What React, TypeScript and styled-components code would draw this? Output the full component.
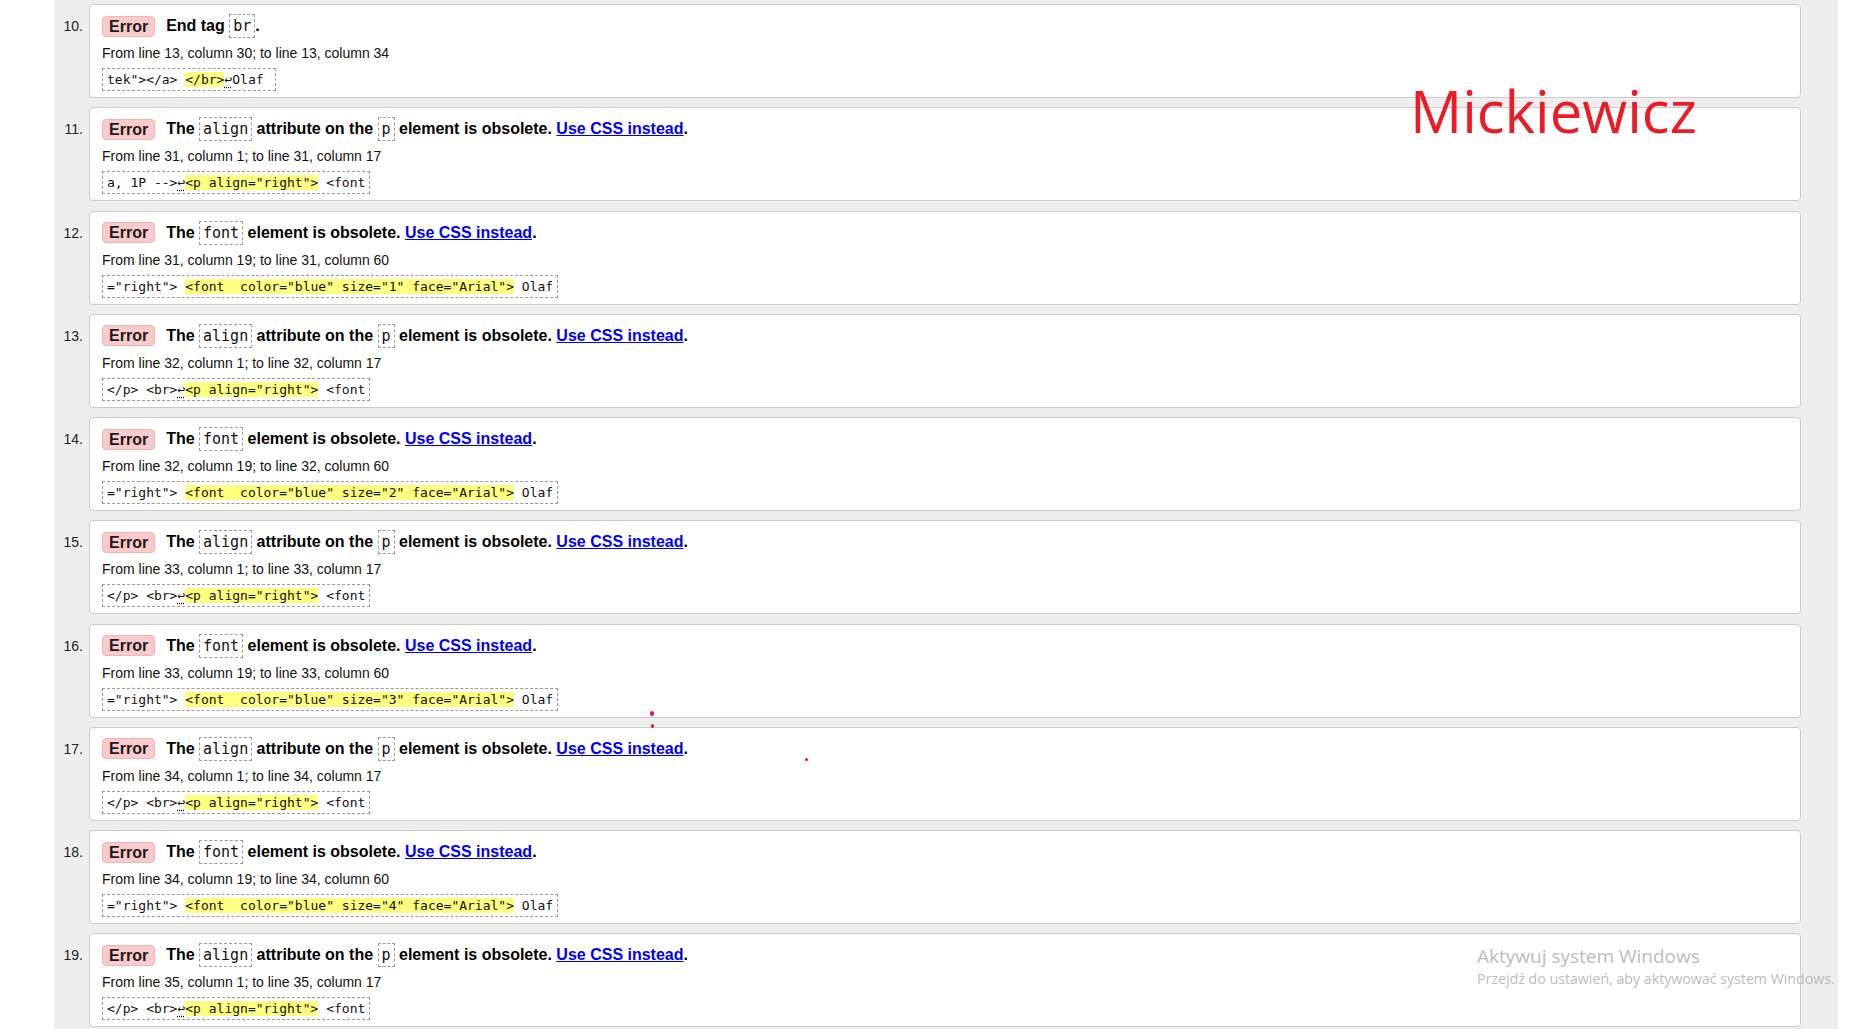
import React from "react";
import styled, { createGlobalStyle } from "styled-components";

const GlobalStyle = createGlobalStyle`
  html, body { margin: 0; padding: 0; background: #ffffff; }
  body { font-family: "Liberation Sans", Arial, sans-serif; overflow: hidden; }
`;

const Page = styled.div`
  position: relative;
  width: 1865px;
  height: 1029px;
  overflow: hidden;
  display: flex;
`;

const Column = styled.div`
  margin-left: 54px;
  width: 1784px;
  background: #eeeeee;
  padding: 4px 37px 0 0;
  box-sizing: border-box;
`;

const List = styled.ol`
  list-style: none;
  margin: 0;
  padding: 0;
  display: flex;
  flex-direction: column;
  gap: 9.25px;
`;

const Item = styled.li`
  display: grid;
  grid-template-columns: 29px 1fr;
  column-gap: 6px;
`;

const Num = styled.div`
  text-align: right;
  font: 14px/16px "Liberation Sans", Arial, sans-serif;
  color: #222;
  padding-top: 14px;
`;

const Card = styled.div`
  background: #ffffff;
  border: 1px solid #cccccc;
  border-radius: 4px;
  box-sizing: border-box;
  height: 94px;
  padding: 8px 12px 7px 12px;
`;

const Title = styled.div`
  display: flex;
  align-items: center;
  height: 26px;
  font: bold 16px/26px "Liberation Sans", Arial, sans-serif;
  color: #000;
  white-space: pre;
`;

const Badge = styled.span`
  display: inline-block;
  box-sizing: border-box;
  height: 21px;
  line-height: 19px;
  padding: 0 6px;
  margin-right: 11px;
  background: #fbcaca;
  border: 1px solid #efb6b6;
  border-radius: 4px;
  color: #1a1a1a;
`;

const Message = styled.span`
  display: inline-flex;
  align-items: center;
`;

const InlineCode = styled.code`
  display: inline-block;
  font: normal 15px/22px "DejaVu Sans Mono", monospace;
  border: 1px dashed #9a9a9a;
  padding: 0 3px;
  color: #111;
`;

const Link = styled.a`
  color: #0000ee;
  text-decoration: underline;
`;

const Location = styled.div`
  margin-top: 3px;
  font: 14px/22px "Liberation Sans", Arial, sans-serif;
  color: #111;
`;

const Extract = styled.code`
  display: inline-block;
  margin-top: 4px;
  font: 13px/21px "DejaVu Sans Mono", monospace;
  border: 1px dashed #9a9a9a;
  padding: 0 4px;
  white-space: pre;
  color: #111;
`;

const Mark = styled.mark`
  background: #ffff80;
  color: #111;
`;

const Lf = styled.span`
  text-decoration: underline dotted #000;
  text-underline-offset: 3px;
`;

const Annotation = styled.div`
  position: absolute;
  left: 1410px;
  top: 82px;
  font: 58px/58px "Open Sans", sans-serif;
  color: #ed1c24;
  white-space: nowrap;
`;

const Dot = styled.span<{ $x: number; $y: number; $w: number; $h: number }>`
  position: absolute;
  left: ${(p) => p.$x}px;
  top: ${(p) => p.$y}px;
  width: ${(p) => p.$w}px;
  height: ${(p) => p.$h}px;
  border-radius: 50%;
  background: #e8141c;
`;

const Watermark = styled.div`
  position: absolute;
  left: 1477px;
  top: 944px;
  color: #bcbcbc;
  font-family: "Open Sans", sans-serif;
  white-space: nowrap;
  pointer-events: none;
`;

const WmTitle = styled.div`
  font-size: 19px;
  line-height: 25px;
`;

const WmSub = styled.div`
  font-size: 14.2px;
  line-height: 20px;
`;

type Entry = {
  n: number;
  kind: "br" | "align" | "font";
  loc: string;
  pre: string;
  lfBefore?: boolean;
  hl: string;
  lfAfter?: boolean;
  post: string;
};

const entries: Entry[] = [
  { n: 10, kind: "br", loc: "From line 13, column 30; to line 13, column 34", pre: 'tek"></a> ', hl: "</br>", lfAfter: true, post: "Olaf " },
  { n: 11, kind: "align", loc: "From line 31, column 1; to line 31, column 17", pre: "a, 1P -->", lfBefore: true, hl: '<p align="right">', post: " <font" },
  { n: 12, kind: "font", loc: "From line 31, column 19; to line 31, column 60", pre: '="right"> ', hl: '<font  color="blue" size="1" face="Arial">', post: " Olaf" },
  { n: 13, kind: "align", loc: "From line 32, column 1; to line 32, column 17", pre: "</p> <br>", lfBefore: true, hl: '<p align="right">', post: " <font" },
  { n: 14, kind: "font", loc: "From line 32, column 19; to line 32, column 60", pre: '="right"> ', hl: '<font  color="blue" size="2" face="Arial">', post: " Olaf" },
  { n: 15, kind: "align", loc: "From line 33, column 1; to line 33, column 17", pre: "</p> <br>", lfBefore: true, hl: '<p align="right">', post: " <font" },
  { n: 16, kind: "font", loc: "From line 33, column 19; to line 33, column 60", pre: '="right"> ', hl: '<font  color="blue" size="3" face="Arial">', post: " Olaf" },
  { n: 17, kind: "align", loc: "From line 34, column 1; to line 34, column 17", pre: "</p> <br>", lfBefore: true, hl: '<p align="right">', post: " <font" },
  { n: 18, kind: "font", loc: "From line 34, column 19; to line 34, column 60", pre: '="right"> ', hl: '<font  color="blue" size="4" face="Arial">', post: " Olaf" },
  { n: 19, kind: "align", loc: "From line 35, column 1; to line 35, column 17", pre: "</p> <br>", lfBefore: true, hl: '<p align="right">', post: " <font" },
];

function MessageText({ kind }: { kind: Entry["kind"] }) {
  if (kind === "br") {
    return (
      <Message>
        {"End tag "}
        <InlineCode>br</InlineCode>
        {"."}
      </Message>
    );
  }
  if (kind === "align") {
    return (
      <Message>
        {"The "}
        <InlineCode>align</InlineCode>
        {" attribute on the "}
        <InlineCode>p</InlineCode>
        {" element is obsolete. "}
        <Link href="#">Use CSS instead</Link>
        {"."}
      </Message>
    );
  }
  return (
    <Message>
      {"The "}
      <InlineCode>font</InlineCode>
      {" element is obsolete. "}
      <Link href="#">Use CSS instead</Link>
      {"."}
    </Message>
  );
}

export default function App() {
  return (
    <Page>
      <GlobalStyle />
      <Column>
        <List>
          {entries.map((e) => (
            <Item key={e.n}>
              <Num>{e.n}.</Num>
              <Card>
                <Title>
                  <Badge>Error</Badge>
                  <MessageText kind={e.kind} />
                </Title>
                <Location>{e.loc}</Location>
                <Extract>
                  {e.pre}
                  {e.lfBefore && <Lf>↩</Lf>}
                  <Mark>{e.hl}</Mark>
                  {e.lfAfter && <Lf>↩</Lf>}
                  {e.post}
                </Extract>
              </Card>
            </Item>
          ))}
        </List>
      </Column>
      <Annotation>Mickiewicz</Annotation>
      <Dot $x={650} $y={711} $w={4} $h={5} />
      <Dot $x={651} $y={724} $w={3} $h={4} />
      <Dot $x={805} $y={758} $w={3} $h={3} />
      <Watermark>
        <WmTitle>Aktywuj system Windows</WmTitle>
        <WmSub>Przejdź do ustawień, aby aktywować system Windows.</WmSub>
      </Watermark>
    </Page>
  );
}
